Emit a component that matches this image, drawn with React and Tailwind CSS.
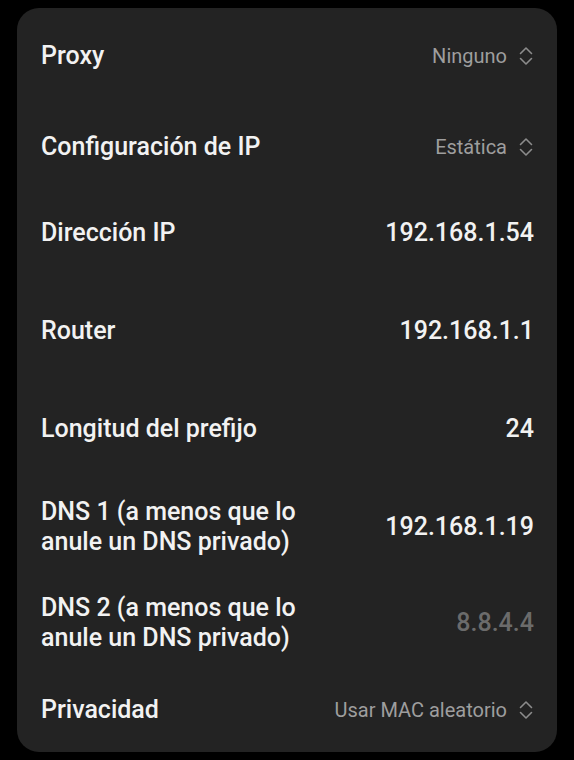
import React from "react";

const Chevrons = () => (
  <svg width="16" height="22" viewBox="0 0 16 22" fill="none" stroke="#8c8c8c" strokeWidth="1.6" strokeLinecap="round" strokeLinejoin="round">
    <path d="M2.5 8.5 L8 3 L13.5 8.5" />
    <path d="M2.5 13.5 L8 19 L13.5 13.5" />
  </svg>
);

const Row = ({ className, label, value, kind }) => (
  <div className={`flex items-center justify-between ${className}`}>
    <div className="text-[25px] leading-[30px] font-medium text-[#f2f2f2] max-w-[300px]">{label}</div>
    {kind === "select" ? (
      <div className="flex items-center gap-[11px]">
        <span className="text-[20px] leading-[26px] text-[#9e9e9e]">{value}</span>
        <Chevrons />
      </div>
    ) : (
      <div className={`text-[25px] leading-[30px] font-medium ${kind === "dim" ? "text-[#6b6b6b]" : "text-[#f2f2f2]"}`}>{value}</div>
    )}
  </div>
);

export default function App() {
  return (
    <div className="w-[574px] h-[760px] bg-black pt-[8px]" style={{ fontFamily: "Roboto, 'Noto Sans', sans-serif" }}>
      <div className="ml-[17px] w-[540px] h-[744px] bg-[#232323] rounded-[22px] pt-[3px] pl-[24px] pr-[23px]">
        <Row className="h-[90px]" label="Proxy" value="Ninguno" kind="select" />
        <Row className="h-[89px] pt-[2px]" label="Configuración de IP" value="Estática" kind="select" />
        <Row className="h-[92px] pb-[6px]" label="Dirección IP" value="192.168.1.54" />
        <Row className="h-[98px]" label="Router" value="192.168.1.1" />
        <Row className="h-[98px]" label="Longitud del prefijo" value="24" />
        <Row className="h-[97px]" label="DNS 1 (a menos que lo anule un DNS privado)" value="192.168.1.19" />
        <Row className="h-[92px] pt-[4px]" label="DNS 2 (a menos que lo anule un DNS privado)" value="8.8.4.4" kind="dim" />
        <Row className="h-[85px]" label="Privacidad" value="Usar MAC aleatorio" kind="select" />
      </div>
    </div>
  );
}
